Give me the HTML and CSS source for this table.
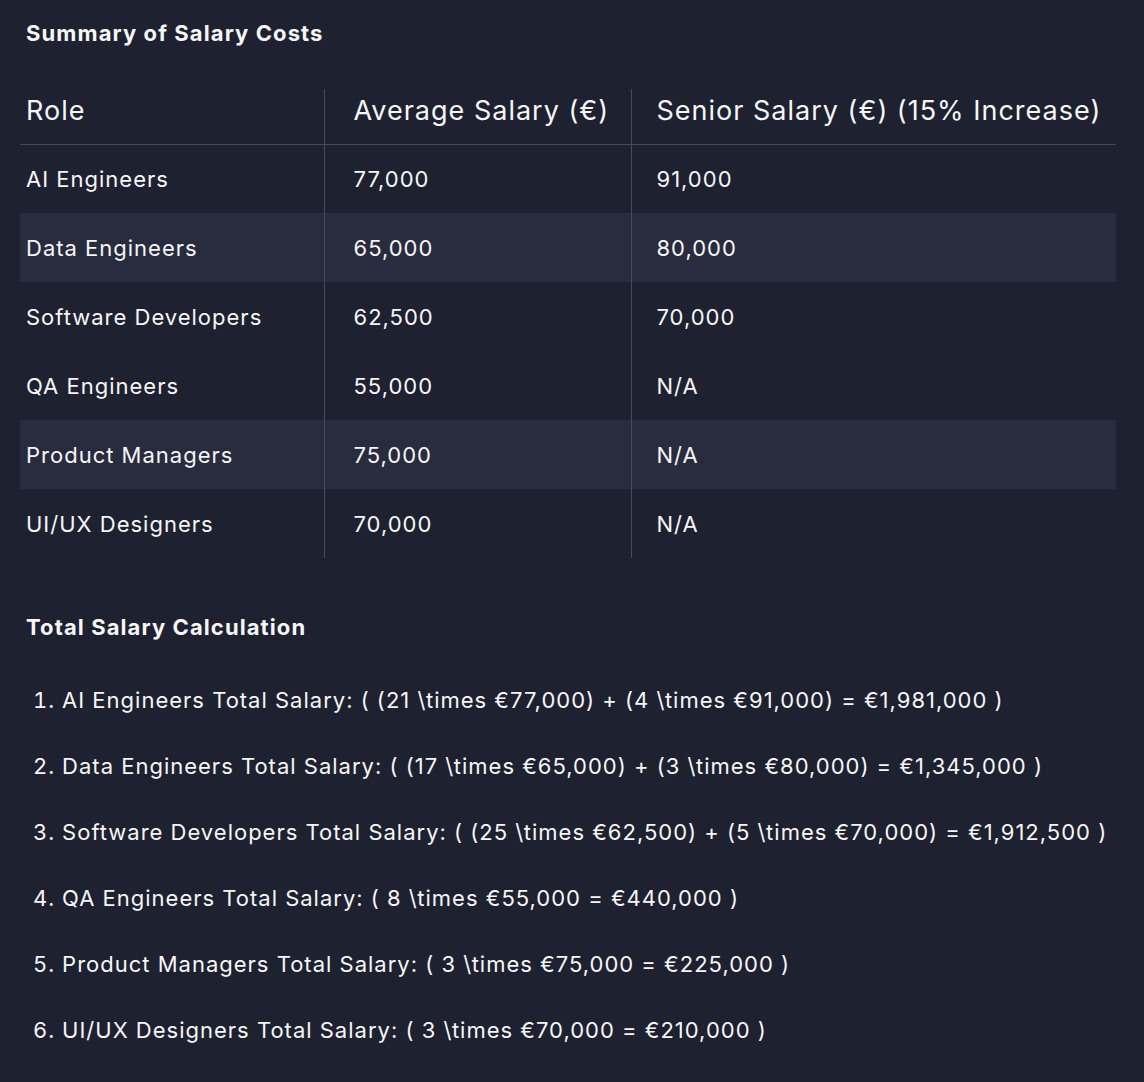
FILE: index.html
```html
<!DOCTYPE html>
<html lang="en">
<head>
<meta charset="utf-8">
<title>Summary of Salary Costs</title>
<link rel="stylesheet" href="styles.css">
</head>
<body>
<main class="page">
  <h3 class="section-title">Summary of Salary Costs</h3>
  <table class="salary-table">
    <colgroup>
      <col class="c1"><col class="c2"><col class="c3">
    </colgroup>
    <thead>
      <tr>
        <th>Role</th>
        <th>Average Salary (€)</th>
        <th>Senior Salary (€) (15% Increase)</th>
      </tr>
    </thead>
    <tbody>
      <tr><td>AI Engineers</td><td>77,000</td><td>91,000</td></tr>
      <tr class="stripe"><td>Data Engineers</td><td>65,000</td><td>80,000</td></tr>
      <tr><td>Software Developers</td><td>62,500</td><td>70,000</td></tr>
      <tr><td>QA Engineers</td><td>55,000</td><td>N/A</td></tr>
      <tr class="stripe"><td>Product Managers</td><td>75,000</td><td>N/A</td></tr>
      <tr><td>UI/UX Designers</td><td>70,000</td><td>N/A</td></tr>
    </tbody>
  </table>

  <h3 class="section-title second">Total Salary Calculation</h3>
  <ol class="calc-list">
    <li>AI Engineers Total Salary: ( (21 \times €77,000) + (4 \times €91,000) = €1,981,000 )</li>
    <li>Data Engineers Total Salary: ( (17 \times €65,000) + (3 \times €80,000) = €1,345,000 )</li>
    <li>Software Developers Total Salary: ( (25 \times €62,500) + (5 \times €70,000) = €1,912,500 )</li>
    <li>QA Engineers Total Salary: ( 8 \times €55,000 = €440,000 )</li>
    <li>Product Managers Total Salary: ( 3 \times €75,000 = €225,000 )</li>
    <li>UI/UX Designers Total Salary: ( 3 \times €70,000 = €210,000 )</li>
  </ol>
</main>
</body>
</html>
```

FILE: styles.css
```css
html, body {
  margin: 0;
  padding: 0;
  background: #1e2130;
}

body {
  font-family: Inter, "Noto Sans", "Liberation Sans", sans-serif;
  color: #f6f6f6;
  height: 1082px;
  overflow: hidden;
  letter-spacing: 1px;
}

.page {
  padding: 18px 28px 0 20px;
}

.section-title {
  margin: 0;
  padding-left: 6px;
  font-size: 22px;
  line-height: 30px;
  font-weight: 700;
  letter-spacing: 1.1px;
}

.section-title.second {
  margin-top: 54px;
}

.salary-table {
  margin-top: 41px;
  width: 1096px;
  border-collapse: collapse;
  table-layout: fixed;
}

.salary-table col.c1 { width: 304px; }
.salary-table col.c2 { width: 307px; }
.salary-table col.c3 { width: 485px; }

.salary-table th {
  height: 55px;
  padding: 0 0 11px 29px;
  text-align: left;
  font-size: 27px;
  font-weight: 400;
  vertical-align: middle;
  border-bottom: 1px solid #454a63;
  box-sizing: border-box;
}

.salary-table td {
  height: 69px;
  padding: 0 0 0 29px;
  font-size: 22px;
  vertical-align: middle;
  box-sizing: border-box;
}

.salary-table th + th,
.salary-table td + td {
  border-left: 1px solid #454a63;
}

.salary-table th:first-child,
.salary-table td:first-child {
  padding-left: 6px;
}

.salary-table th:nth-child(3),
.salary-table td:nth-child(3) {
  padding-left: 25px;
}

.salary-table tr.stripe td {
  background: #282c3e;
}

.calc-list {
  margin: 43px 0 0 0;
  padding: 0 0 0 13px;
  list-style: decimal inside;
  font-size: 22px;
  line-height: 30px;
}

.calc-list li + li {
  margin-top: 36px;
}
```
